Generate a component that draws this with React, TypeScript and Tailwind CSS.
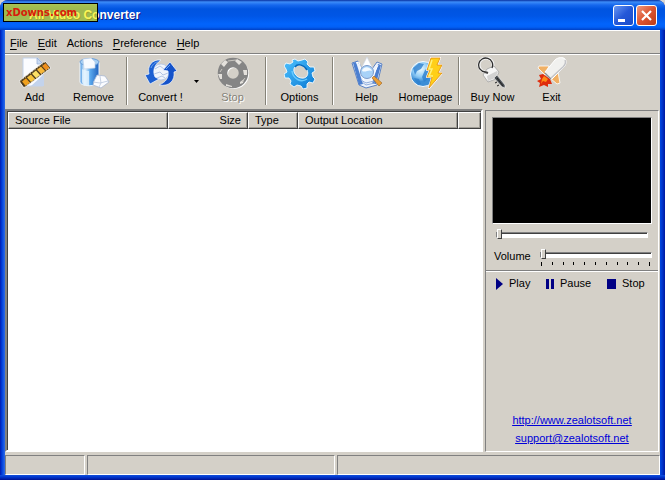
import type { ReactNode } from "react";

const FilmIcon = () => (
  <svg width="32" height="32" viewBox="0 0 32 32">
    <path d="M4 1h15l5 6v22H4z" fill="#fbfcff" stroke="#c3d2ea" />
    <path d="M18 1v6h6z" fill="#c9daf2" stroke="#8fa9d4" strokeWidth=".7" />
    <path d="M25 17v12H12z" fill="#c3d3ec" />
    <path d="M0 24 26 4l6 7L5 31z" fill="#4d3a1c" stroke="#fff" strokeWidth=".8" />
    <path d="m3 24.500 4-3.200 4 4.500-4.500 3z" fill="#f0a01e" />
    <path d="m8 20.600 4-3.200 4 4.500-4 3z" fill="#f8c23a" />
    <path d="m13 16.700 4-3.200 4 4.500-4 3z" fill="#fde066" />
    <path d="m18 12.800 4-3.200 4 4.500-4 3z" fill="#f8b838" />
    <path d="m23 8.900 3.500-2.700 4 4.500-3.500 2.700z" fill="#ee8f1c" />
    <path d="M1.500 24 26 5M5.500 30 31 10.500" stroke="#f2e2b4" strokeDasharray="1 2" />
  </svg>
);

const BinIcon = () => (
  <svg width="32" height="32" viewBox="0 0 32 32">
    <defs>
      <linearGradient id="bin" x1="0" x2="1">
        <stop offset="0" stopColor="#3f90e0" />
        <stop offset=".25" stopColor="#eef9ff" />
        <stop offset=".55" stopColor="#58a6ec" />
        <stop offset="1" stopColor="#1f60bc" />
      </linearGradient>
    </defs>
    <path d="M2 5v20c0 5 18 5 19 0V5z" fill="url(#bin)" stroke="#eef6ff" />
    <ellipse cx="11.500" cy="5" rx="9.500" ry="3.500" fill="#a6cff4" stroke="#6b9ed8" />
    <path d="m5 2 8-1 4 4v6l-11 1z" fill="#f7faff" stroke="#bdd0e8" strokeWidth=".7" />
    <path d="M4 12v13c1 3 4 4 7 4V14c-3 0-5-.500-7-2z" fill="#e2f3ff" opacity=".8" />
    <path d="m19 18 8 1 4 6-8 6-8-3 1-4z" fill="#fbfcff" stroke="#aab8d0" strokeWidth=".8" />
    <path d="m15 25 7 1 8-2M22 19l1 7-2 4" fill="none" stroke="#b8c5dc" strokeWidth=".8" />
  </svg>
);

const ConvertIcon = () => (
  <svg width="32" height="32" viewBox="0 0 32 32">
    <circle cx="16" cy="15" r="8" fill="#f1f5fc" stroke="#a9bfe5" strokeWidth=".7" />
    <path d="m10 12 5-3 4 3 4-2M9 17l6-2 3 3 5-2M12 21l5-2 3 2" fill="none" stroke="#b4c5e4" />
    <path
      d="M16 3C7 2 2 9 4 17l-4 1 5 9 9-5-4-2C7 13 10 7 16 3z"
      fill="#1c5fd2"
      stroke="#f4f8ff"
      strokeWidth=".7"
    />
    <path
      d="M14 28c11 2 16-5 15-13l3-1-7-9-7 8 5 1c1 7-2 11-9 14z"
      fill="#1553ca"
      stroke="#f4f8ff"
      strokeWidth=".7"
    />
    <path d="M6 11c1-3 4-6 7-6M25 8l-4 4" fill="none" stroke="#67a4f4" />
  </svg>
);

const DisabledStopIcon = () => (
  <svg width="32" height="32" viewBox="0 0 32 32">
    <circle cx="17" cy="17" r="10.500" fill="none" stroke="#fff" strokeWidth="9" />
    <circle cx="16" cy="16" r="10.500" fill="none" stroke="#858585" strokeWidth="9.500" />
    <path
      d="m8 3-4 4 3 3 4-5zM20 2l5 3-3 3-4-4zM1 17h4v5H3zM26 13h4v5h-3zM9 27l6 2v1l-6-1zM23 25l4-3-1 4-3 1z"
      fill="#e4e1dc"
    />
    <path d="m11 4 8-1M5 12l-2 3M28 21l-3 4" stroke="#c9c6c0" />
  </svg>
);

const GearIcon = () => (
  <svg width="32" height="32" viewBox="0 0 32 32">
    <defs>
      <linearGradient id="gear" x1="0" y1="0" x2="1" y2="1">
        <stop offset="0" stopColor="#4fc2ff" />
        <stop offset="1" stopColor="#0878d2" />
      </linearGradient>
    </defs>
    <path
      fillRule="evenodd"
      d="M8 3l3-1 3 2 4-1 3-1 3 3-1 2 3 3 4 0 1 4-3 2 1 4 2 2-2 4-4-1-2 2 0 4-4 1-2-3-4-1-3 2-4-3 1-3-2-3-4 0-1-4 3-2-1-3-2-3 2-3 4 1 3-2zM11 10c-3 3 0 10 6 11 6 1 8-4 6-8-3-5-9-6-12-3z"
      fill="url(#gear)"
      stroke="#f2faff"
      strokeWidth=".9"
      strokeLinejoin="round"
    />
    <path d="M11 10c3-4 9-2 12 3" fill="none" stroke="#0768ba" strokeWidth="1.500" />
    <path d="M8 14c1 8 9 12 15 8" fill="none" stroke="#68caff" strokeWidth="1.500" />
  </svg>
);

const HelpIcon = () => (
  <svg width="32" height="32" viewBox="0 0 32 32">
    <path d="m1 6 6-2 4 8 10 0 5-7 5 2-5 21-11 3-7-3z" fill="#edf3fc" stroke="#5b82c4" />
    <path d="m2 6 3-1 7 22-4 1zM30 8l-3-1-6 20 4 0z" fill="#4c7fd0" />
    <path d="m5 6 3-1 6 22M27 8l-8 18" fill="none" stroke="#fff" />
    <path d="m10 23 5 3 8-2M11 25l4 3 9-2" fill="none" stroke="#90addc" />
    <path d="m16 0 6 12H10z" fill="#fff" stroke="#c7d3e6" strokeWidth=".6" />
    <circle cx="16" cy="15" r="6.500" fill="#a8d2f8" stroke="#7d9ac9" />
    <path d="M11 14c1-5 8-5 10 0-4-2-6 2-10 0z" fill="#f4faff" />
    <path d="m21 21 2-2 8 7-3 3z" fill="#eca035" stroke="#9a6327" strokeWidth=".6" />
  </svg>
);

const GlobeIcon = () => (
  <svg width="32" height="32" viewBox="0 0 32 32">
    <defs>
      <radialGradient id="globe" cx=".4" cy=".3">
        <stop offset="0" stopColor="#effbff" />
        <stop offset=".6" stopColor="#92cdf6" />
        <stop offset="1" stopColor="#3c8ed6" />
      </radialGradient>
    </defs>
    <circle cx="13" cy="17" r="12.500" fill="url(#globe)" stroke="#f8fcff" />
    <path d="m3 11 6-5 5 1-3 5-4 2-2 4zM15 13l4-3 3 4-3 7-5 4-2-5zM4 21l5 1 2 5-3 1z" fill="#2d7fce" opacity=".8" />
    <path
      d="M21 1h9l-3 7h5l-4 8h4L19 31l3-11h-5l3-7h-3z"
      fill="#ffcf18"
      stroke="#fff"
      strokeWidth="2"
      strokeLinejoin="round"
    />
    <path d="M21 1h9l-3 7h5l-4 8h4L19 31l3-11h-5l3-7h-3z" fill="#ffcf18" stroke="#df8a10" strokeWidth=".8" />
    <path d="m22 3-3 9h3l-3 7h4" fill="none" stroke="#fff27a" strokeWidth="1.500" />
  </svg>
);

const KeyIcon = () => (
  <svg width="32" height="32" viewBox="0 0 32 32">
    <circle cx="9" cy="8" r="7" fill="none" stroke="#f4f4f4" strokeWidth="3" />
    <path d="m10 12 7-3 5 6-3 7-8 3-5-7z" fill="#f5f5f5" stroke="#a2a2a2" strokeWidth=".8" />
    <path d="m10 19 10-5 1 1-3 6-7 3z" fill="#d2d2d2" />
    <path d="M8 15a7 7 0 1 1 7-4" fill="none" stroke="#303030" strokeWidth="1.300" />
    <path d="m8 15 3 1" stroke="#444" strokeWidth="2" />
    <path d="m17 21 3-3 8 10v3l-3-1z" fill="#4c5156" stroke="#f5f5f5" strokeWidth=".6" />
    <path d="m20 21 6 8M20 25l-2 1M22 28l-2 1" stroke="#222" />
  </svg>
);

const RocketIcon = () => (
  <svg width="32" height="32" viewBox="0 0 32 32">
    <path d="m13 9-10 0-1 2 7 7zM22 15l2 11-3 1-7-6z" fill="#f0b065" stroke="#fff" strokeWidth=".8" />
    <path d="m7 17 7 5 2 5-4 0 0 3-4-2-5 2 1-4-3-2 4-2-2-4z" fill="#df2c0d" />
    <path d="m8 19 4 3-2 3-3-1-2 3 1-5z" fill="#ff8a16" />
    <path d="M9 15 19 3c3-3 8-3 10-1s1 6-1 8L16 22z" fill="#f1f1ef" stroke="#fff" />
    <path d="M15 21 27 10c2-2 3-5 2-7" fill="none" stroke="#c3c4c8" strokeWidth="1.500" />
    <path d="m9 16 6 6" stroke="#8a8d93" strokeWidth="1.200" />
  </svg>
);

function Tool({ label, children, disabled }: { label: string; children: ReactNode; disabled?: boolean }) {
  return (
    <button
      disabled={disabled}
      className="flex w-[59px] shrink-0 flex-col items-center whitespace-nowrap disabled:text-[#858278] disabled:[text-shadow:1px_1px_0_white]"
    >
      {children}
      <span className="leading-4">{label}</span>
    </button>
  );
}

const Separator = () => (
  <div className="flex w-2 shrink-0 justify-center">
    <div className="w-0.5 border-r border-l border-r-white border-l-[#858278]" />
  </div>
);

const menus = ["File", "Edit", "Actions", "Preference", "Help"];

const columns = [
  { name: "Source File", style: "w-40 text-left" },
  { name: "Size", style: "w-20 text-right" },
  { name: "Type", style: "w-[50px] text-left" },
  { name: "Output Location", style: "w-40 text-left" },
  { name: "", style: "" },
];

const headCell =
  "h-[17px] border-t border-l border-r border-b border-t-white border-l-white border-r-[#404040] border-b-[#404040] bg-[#d4d0c8] px-1.5 py-0 leading-[15px] font-normal shadow-[inset_-1px_-1px_0_#a09d96]";

const slider =
  "block h-3.5 w-full appearance-none bg-transparent [&::-webkit-slider-runnable-track]:h-1.5 [&::-webkit-slider-runnable-track]:border [&::-webkit-slider-runnable-track]:border-t-[#808080] [&::-webkit-slider-runnable-track]:border-l-[#808080] [&::-webkit-slider-runnable-track]:border-r-white [&::-webkit-slider-runnable-track]:border-b-white [&::-webkit-slider-runnable-track]:bg-white [&::-webkit-slider-runnable-track]:shadow-[inset_0_1px_0_#404040] [&::-webkit-slider-thumb]:-mt-1 [&::-webkit-slider-thumb]:h-2.5 [&::-webkit-slider-thumb]:w-[5px] [&::-webkit-slider-thumb]:appearance-none [&::-webkit-slider-thumb]:border [&::-webkit-slider-thumb]:border-t-white [&::-webkit-slider-thumb]:border-l-white [&::-webkit-slider-thumb]:border-r-[#404040] [&::-webkit-slider-thumb]:border-b-[#404040] [&::-webkit-slider-thumb]:bg-[#d4d0c8]";

export default function App() {
  return (
    <div className="bg-[#d8d5d0]">
      <div className="flex min-h-screen flex-col overflow-hidden rounded-t-lg bg-[linear-gradient(90deg,#0019b0,#0040dc_2px,#2f6ce8_5px,#0048e0_calc(100%-5px),#0038d0_calc(100%-3px),#0019a0)] font-['Liberation_Sans',Arial,sans-serif] text-[11px] text-black">
        <header className="relative flex h-[30px] items-center justify-between bg-[linear-gradient(180deg,#0831a0_0,#3c8cf8_2px,#1668ee_5px,#0054e0_9px,#0056e6_16px,#0264fc_24px,#0260f6_27px,#0040c4_30px)] pr-2 pl-[29px]">
          <h1 className="text-xs font-bold text-white [text-shadow:1px_1px_0_#0a1883]">All Video Converter</h1>
          <div className="absolute top-[3px] left-[3px] flex h-[19px] w-[95px] items-center border border-black bg-[#f5f000]/65 pl-0.5 font-['DejaVu_Sans',sans-serif] text-[10px] font-bold text-[#d81b0a]">
            xDowns.com
          </div>
          <div className="flex gap-0.5">
            <button
              aria-label="Minimize"
              className="h-[21px] w-[21px] rounded-[3px] border border-white bg-[linear-gradient(135deg,#6a98f2,#2458d8_50%,#1b4cc8)]"
            >
              <svg viewBox="0 0 19 19" className="block">
                <path d="M4 13h7v3H4z" fill="#fff" />
              </svg>
            </button>
            <button
              aria-label="Close"
              className="h-[21px] w-[21px] rounded-[3px] border border-white bg-[linear-gradient(135deg,#f09a7e,#dc5430_50%,#bd3c18)]"
            >
              <svg viewBox="0 0 19 19" className="block">
                <path d="m5 5 9 9M14 5l-9 9" stroke="#fff" strokeWidth="2.200" />
              </svg>
            </button>
          </div>
        </header>

        <div className="mx-[5px] flex grow flex-col border-t border-white bg-[#d4d0c8]">
          <nav className="flex h-[23px] items-center gap-2.5 border-b border-[#808080] px-[5px] pt-0.5">
            {menus.map((m) => (
              <button key={m} className="leading-4">
                {m === "Actions" ? (
                  m
                ) : (
                  <>
                    <span className="underline underline-offset-2">{m[0]}</span>
                    {m.slice(1)}
                  </>
                )}
              </button>
            ))}
          </nav>

          <div className="flex h-[55px] border-t border-white pt-0.5 pb-1">
            <Tool label="Add"><FilmIcon /></Tool>
            <Tool label="Remove"><BinIcon /></Tool>
            <Separator />
            <Tool label="Convert !"><ConvertIcon /></Tool>
            <button aria-label="Convert choices" className="flex w-[13px] shrink-0 items-center justify-center">
              <svg width="5" height="3" viewBox="0 0 5 3"><path d="M0 0h5L2.500 3z" /></svg>
            </button>
            <Tool label="Stop" disabled><DisabledStopIcon /></Tool>
            <Separator />
            <Tool label="Options"><GearIcon /></Tool>
            <Separator />
            <Tool label="Help"><HelpIcon /></Tool>
            <Tool label="Homepage"><GlobeIcon /></Tool>
            <Separator />
            <Tool label="Buy Now"><KeyIcon /></Tool>
            <Tool label="Exit"><RocketIcon /></Tool>
          </div>

          <main className="flex grow">
            <section className="flex grow flex-col border-2 border-t-[#808080] border-r-white border-b-white border-l-[#808080] bg-white">
              <table className="w-full table-fixed border-separate border-spacing-0 border-t border-l border-[#404040]">
                <thead>
                  <tr>
                    {columns.map((c) => (
                      <th key={c.name} className={`${headCell} ${c.style}`}>{c.name}</th>
                    ))}
                  </tr>
                </thead>
              </table>
              <div className="grow border-l border-[#404040]" />
            </section>

            <aside className="mt-px mr-px ml-0.5 flex w-[174px] shrink-0 flex-col border border-t-[#808080] border-r-white border-b-white border-l-[#808080]">
              <div className="border-b border-[#808080] px-1.5 pt-1.5">
                <div className="h-[107px] border border-t-[#808080] border-r-white border-b-white border-l-[#808080] bg-black" />
                <div className="px-1 pt-1">
                  <input type="range" aria-label="Position" defaultValue={0} className={slider} />
                </div>
                <div className="mt-1.5 flex h-[22px] items-start">
                  <label htmlFor="volume" className="w-12 shrink-0 pl-0.5 leading-4">Volume</label>
                  <div className="grow">
                    <input id="volume" type="range" defaultValue={0} className={slider} />
                    <div className="flex justify-between pr-0.5 pl-px">
                      {Array.from({ length: 11 }, (_, i) => (
                        <span key={i} className={i % 10 === 0 ? "h-1 w-px bg-black" : "h-[3px] w-px bg-black"} />
                      ))}
                    </div>
                  </div>
                </div>
              </div>
              <div className="flex h-6 items-center border-t border-white pl-2.5 whitespace-nowrap">
                <button className="flex w-[50px] items-center gap-1.5">
                  <svg width="7" height="12" viewBox="0 0 7 12" fill="#000084"><path d="M0 0v12l7-6z" /></svg>
                  Play
                </button>
                <button className="flex w-[61px] items-center gap-1.5">
                  <svg width="8" height="10" viewBox="0 0 8 10" fill="#000084"><path d="M0 0h3v10H0zM5 0h3v10H5z" /></svg>
                  Pause
                </button>
                <button className="flex items-center gap-1.5">
                  <svg width="9" height="10" viewBox="0 0 9 10" fill="#000084"><path d="M0 0h9v10H0z" /></svg>
                  Stop
                </button>
              </div>
              <div className="mt-auto flex flex-col items-center pb-1 leading-[18px] text-[#0000d8] underline">
                <a href="http://www.zealotsoft.net">http://www.zealotsoft.net</a>
                <a href="mailto:support@zealotsoft.net">support@zealotsoft.net</a>
              </div>
            </aside>
          </main>

          <footer className="mt-[3px] flex h-5 gap-0.5">
            <div className="w-20 border border-t-[#808080] border-r-white border-b-white border-l-[#808080]" />
            <div className="w-[248px] border border-t-[#808080] border-r-white border-b-white border-l-[#808080]" />
            <div className="grow border border-t-[#808080] border-r-white border-b-white border-l-[#808080]" />
          </footer>
        </div>
        <div className="h-[5px] bg-[linear-gradient(180deg,#1450dc,#0038d0_2px,#001090)]" />
      </div>
    </div>
  );
}
